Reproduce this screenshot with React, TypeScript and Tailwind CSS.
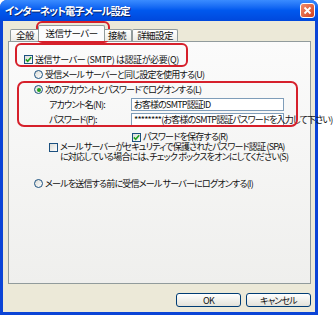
import React from "react";

const jp = "font-['Noto_Sans_CJK_JP','Noto_Sans',sans-serif] [font-feature-settings:'palt']";

function Check({ on }: { on?: boolean }) {
  return (
    <span className="inline-flex h-[9px] w-[9px] shrink-0 items-center justify-center border border-[#1c5180] bg-gradient-to-br from-[#dcdcd6] to-white">
      {on && (
        <svg width="7" height="7" viewBox="0 0 7 7">
          <path d="M0.8 3.4 L2.7 5.3 L6.2 1.2" fill="none" stroke="#21a121" strokeWidth="1.6" />
        </svg>
      )}
    </span>
  );
}

function Radio({ on }: { on?: boolean }) {
  return (
    <span className="inline-flex h-[9px] w-[9px] shrink-0 items-center justify-center rounded-full border border-[#1c5180] bg-gradient-to-br from-[#dcdcd6] to-white">
      {on && <span className="h-[4px] w-[4px] rounded-full bg-[#21a121]" />}
    </span>
  );
}

export default function App() {
  return (
    <div className={`relative h-[317px] w-[333px] whitespace-nowrap bg-white text-[9px] leading-[11px] tracking-[-0.8px] text-[#111] ${jp}`}>
      <div className="flex h-[315px] w-[318px] flex-col rounded-t-[7px] bg-[#0b44d6]">
        {/* title bar */}
        <div className="flex h-[21px] items-center justify-between rounded-t-[7px] bg-gradient-to-b from-[#3a8cff] via-[#0058ee] to-[#0048dc] pl-[5px] pr-[3px]">
          <span className="text-[10.5px] font-bold leading-[14px] tracking-[-1px] text-white [text-shadow:1px_1px_0_#0a246a]">
            インターネット電子メール設定
          </span>
          <span className="flex h-[15px] w-[15px] items-center justify-center rounded-[3px] border border-white bg-gradient-to-br from-[#f08a6a] to-[#d4401c]">
            <svg width="9" height="9" viewBox="0 0 9 9">
              <path d="M1.5 1.5 L7.5 7.5 M7.5 1.5 L1.5 7.5" stroke="white" strokeWidth="1.8" />
            </svg>
          </span>
        </div>

        {/* body */}
        <div className="mx-[3px] mb-[3px] flex flex-1 flex-col bg-[#ece9d8] pl-[5px] pr-[4px] pt-[5px]">
          {/* tabs */}
          <div className="relative z-10 flex h-[15px] items-end pl-[2px] text-[9.5px] tracking-[-0.6px]">
            <div className="flex h-[12px] w-[30px] items-center justify-center rounded-t-[2px] border border-b-0 border-[#919b9c] bg-gradient-to-b from-white to-[#ecebe6]">
              全般
            </div>
            <div className="relative z-10 -mx-[2px] flex h-[16px] w-[67px] items-center justify-center rounded-t-[2px] border border-b-0 border-[#919b9c] bg-[#fcfcfe]">
              送信サーバー
            </div>
            <div className="flex h-[12px] w-[29px] items-center justify-center rounded-t-[2px] border border-b-0 border-l-0 border-[#919b9c] bg-gradient-to-b from-white to-[#ecebe6]">
              接続
            </div>
            <div className="flex h-[12px] w-[46px] items-center justify-center rounded-t-[2px] border border-b-0 border-[#919b9c] bg-gradient-to-b from-white to-[#ecebe6]">
              詳細設定
            </div>
          </div>

          {/* panel */}
          <div className="flex h-[243px] flex-col border border-[#919b9c] bg-gradient-to-b from-[#fbfbfb] to-[#efefed] pt-[10px]">
            <div className="flex h-[15px] items-center gap-[2px] pl-[15px]">
              <Check on />
              <span className="tracking-[-0.4px]">送信サーバー (SMTP) は認証が必要(Q)</span>
            </div>
            <div className="flex h-[15px] items-center gap-[2px] pl-[25px]">
              <Radio />
              <span>受信メール サーバーと同じ設定を使用する(U)</span>
            </div>
            <div className="flex h-[15px] items-center gap-[2px] pl-[25px]">
              <Radio on />
              <span>次のアカウントとパスワードでログオンする(L)</span>
            </div>
            <div className="flex h-[15px] items-center pl-[40px]">
              <span className="w-[82px]">アカウント名(N):</span>
              <div className="flex h-[13px] w-[153px] items-center border border-[#7f9db9] bg-white pl-[2px]">
                お客様のSMTP認証ID
              </div>
            </div>
            <div className="flex h-[15px] items-center pl-[40px]">
              <span className="w-[82px]">パスワード(P):</span>
              <div className="flex h-[13px] w-[153px] items-center border border-[#7f9db9] bg-white pl-[2px]">
                ********(お客様のSMTP認証パスワードを入力して下さい)
              </div>
            </div>
            <div className="mt-[5px] flex h-[10px] items-center gap-[2px] pl-[123px] leading-[10px]">
              <Check on />
              <span>パスワードを保存する(R)</span>
            </div>
            <div className="flex gap-[2px] pl-[40px] leading-[10px]">
              <span className="mt-[1px]">
                <Check />
              </span>
              <span>
                メール サーバーがセキュリティで保護されたパスワード認証 (SPA)
                <br />
                に対応している場合には、チェック ボックスをオンにしてください(S)
              </span>
            </div>
            <div className="mt-[14px] flex h-[15px] items-center gap-[2px] pl-[25px]">
              <Radio />
              <span>メールを送信する前に受信メール サーバーにログオンする(I)</span>
            </div>
          </div>

          {/* buttons */}
          <div className="mt-[9px] flex justify-end gap-[5px]">
            <button className="flex h-[14px] w-[65px] items-center justify-center rounded-[3px] border border-[#003c74] bg-gradient-to-b from-white to-[#e3e2da]">
              OK
            </button>
            <button className="flex h-[14px] w-[65px] items-center justify-center rounded-[3px] border border-[#003c74] bg-gradient-to-b from-white to-[#e3e2da]">
              キャンセル
            </button>
          </div>
        </div>
      </div>

      {/* red annotations */}
      <div className="pointer-events-none absolute left-[36px] top-[21px] h-[22px] w-[74px] rounded-[6px] border-2 border-[#d6202b]" />
      <div className="pointer-events-none absolute left-[15px] top-[43px] h-[24px] w-[173px] rounded-[6px] border-2 border-[#d6202b]" />
      <div className="pointer-events-none absolute left-[17px] top-[81px] h-[46px] w-[281px] rounded-[7px] border-2 border-[#d6202b]" />
    </div>
  );
}
